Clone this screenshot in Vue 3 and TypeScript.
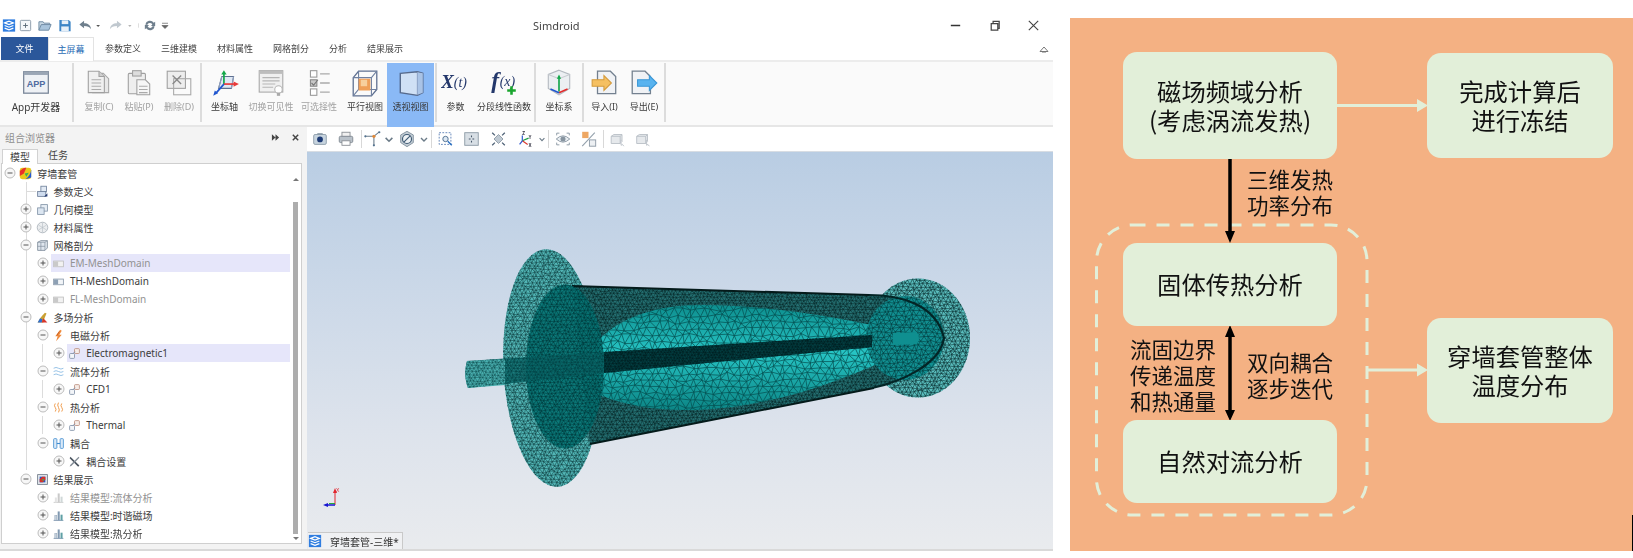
<template>
  <div class="page">
    <div class="window">
      <header class="titlebar">
        <div class="qat">
          <svg v-for="q in qatIcons" :key="q.id" class="qat-icon" :style="{ width: q.w + 'px' }" viewBox="0 0 16 16" v-html="icons[q.id]"></svg>
        </div>
        <span class="app-title">Simdroid</span>
        <div class="win-buttons">
          <svg viewBox="0 0 16 16"><path d="M3 8h10" stroke="#333" stroke-width="1.6" /></svg>
          <svg viewBox="0 0 16 16"><path d="M4.500 6h7v7h-7zM6.500 6V3.500h6.500V11h-1.500" fill="none" stroke="#444" stroke-width="1.300" /></svg>
          <svg viewBox="0 0 16 16"><path d="M3 3l10 10M13 3L3 13" stroke="#444" stroke-width="1.200" /></svg>
        </div>
      </header>

      <nav class="tabs">
        <span class="tab-file">文件</span>
        <span class="tab-home">主屏幕</span>
        <div class="tab-rest">
          <span v-for="t in tabs" :key="t">{{ t }}</span>
        </div>
        <svg class="collapse" viewBox="0 0 10 8"><path d="M1 6.500L5 2l4 4.500zM3 7h4" fill="none" stroke="#777" stroke-width="1" /></svg>
      </nav>

      <section class="ribbon">
        <div v-for="(group, i) in ribbon" :key="i" class="group" :class="'group-' + i">
          <div
            v-for="item in group"
            :key="item.label"
            class="rb-item"
            :class="{ off: item.off, on: item.on }"
            :style="{ width: item.w + 'px' }"
          >
            <svg class="rb-icon" viewBox="0 0 28 28" v-html="icons[item.icon]"></svg>
            <span class="rb-label" :class="{ big: item.icon === 'app' }">{{ item.label }}</span>
          </div>
        </div>
      </section>

      <main class="workspace">
        <aside class="browser">
          <div class="browser-head">
            <span>组合浏览器</span>
            <div class="head-btns">
              <svg viewBox="0 0 10 10"><path d="M1 1.500l4 3.500-4 3.500zM5 1.500l4 3.500-4 3.500z" fill="#444" /></svg>
              <svg viewBox="0 0 10 10"><path d="M2 2l6 6M8 2L2 8" stroke="#444" stroke-width="1.600" /></svg>
            </div>
          </div>
          <div class="browser-tabs">
            <span class="active">模型</span>
            <span>任务</span>
          </div>
          <div class="tree-box">
            <ul class="tree">
              <li v-for="row in rows" :key="row.label" class="tree-row">
                <span
                  v-for="c in row.level + 1"
                  :key="c"
                  class="col"
                  :class="{ guide: row.guides.includes(c - 1), stub: !row.exp && c === row.level + 1 }"
                >
                  <svg v-if="c === row.level + 1 && row.exp" class="expander" viewBox="0 0 12 12">
                    <circle cx="6" cy="6" r="5" fill="#f7f7f7" stroke="#bcbcbc" />
                    <path :d="row.exp === '+' ? 'M3.500 6h5M6 3.500v5' : 'M3.500 6h5'" stroke="#555" stroke-width="1" />
                  </svg>
                </span>
                <div class="node" :class="{ selected: row.selected, dim: row.dim }">
                  <svg class="node-icon" viewBox="0 0 16 16" v-html="icons[row.icon]"></svg>
                  <span class="node-text">{{ row.label }}</span>
                </div>
              </li>
            </ul>
            <div class="scrollbar">
              <i class="arrow-up"></i>
              <b class="thumb"></b>
              <i class="arrow-down"></i>
            </div>
          </div>
        </aside>

        <section class="view">
          <div class="toolbar">
            <template v-for="(t, i) in tools" :key="i">
              <span v-if="t.id === 'sep'" class="tool-sep"></span>
              <svg v-else-if="t.id === 'chev'" class="tool" :style="{ width: t.w + 'px' }" viewBox="0 0 10 16" preserveAspectRatio="xMidYMid meet"><path d="M2 7l3 3 3-3" fill="none" stroke="#6b7b88" stroke-width="1.400" /></svg>
              <svg v-else class="tool" :style="{ width: t.w + 'px' }" viewBox="0 0 20 20" v-html="icons[t.id]"></svg>
            </template>
          </div>
          <div class="canvas">
            <svg class="scene" viewBox="307 152 746 397" preserveAspectRatio="none">
              <defs>
                <linearGradient id="sky" x1="0" y1="0" x2="0" y2="1">
                  <stop offset="0" stop-color="#b9cde3" />
                  <stop offset="0.35" stop-color="#cbd8e8" />
                  <stop offset="0.7" stop-color="#dde3ec" />
                  <stop offset="1" stop-color="#e9ebee" />
                </linearGradient>
                <linearGradient id="core" x1="0" y1="0" x2="0" y2="1">
                  <stop offset="0" stop-color="#0d8e8e" />
                  <stop offset="0.45" stop-color="#27c4c4" />
                  <stop offset="1" stop-color="#0c8686" />
                </linearGradient>
                <clipPath id="clip-fl"><ellipse cx="551.500" cy="368" rx="48" ry="119" transform="rotate(-3 551.500 368)" /></clipPath>
                <clipPath id="clip-fr"><ellipse cx="918" cy="338" rx="52" ry="59.500" /></clipPath>
                <clipPath id="clip-cone"><path :d="conePath" /></clipPath>
                <clipPath id="clip-core"><path :d="corePath" /></clipPath>
                <clipPath id="clip-dl"><ellipse cx="565" cy="366.500" rx="39" ry="82" /></clipPath>
                <clipPath id="clip-dr"><ellipse cx="905" cy="338" rx="39" ry="42" /></clipPath>
                <clipPath id="clip-band"><path :d="bandPath" /></clipPath>
                <clipPath id="clip-rod"><path :d="rodPath" /></clipPath>
              </defs>
              <rect x="307" y="152" width="746" height="397" fill="url(#sky)" />

              <ellipse cx="551.500" cy="368" rx="48" ry="119" transform="rotate(-3 551.500 368)" fill="#52b6b6" />
              <path :d="meshFlangeL" clip-path="url(#clip-fl)" fill="none" stroke="#0a3335" stroke-width=".6" stroke-opacity=".85" />
              <ellipse cx="918" cy="338" rx="52" ry="59.500" fill="#5abdbd" />
              <path :d="meshFlangeR" clip-path="url(#clip-fr)" fill="none" stroke="#082b2d" stroke-width=".65" stroke-opacity=".9" />

              <path :d="conePath" fill="#246f71" />
              <path :d="meshCone" clip-path="url(#clip-cone)" fill="none" stroke="#041d1e" stroke-width=".6" stroke-opacity=".8" />
              <path d="M572 286L869 295M590 444L874 388" stroke="#041a1a" stroke-width="2" fill="none" />

              <path :d="corePath" fill="url(#core)" />
              <path :d="meshCore" clip-path="url(#clip-core)" fill="none" stroke="#064f51" stroke-width=".8" stroke-opacity=".9" />

              <ellipse cx="565" cy="366.500" rx="39" ry="82" fill="#057474" fill-opacity=".9" />
              <path :d="meshDiscL" clip-path="url(#clip-dl)" fill="none" stroke="#032f31" stroke-width=".55" stroke-opacity=".85" />
              <ellipse cx="905" cy="338" rx="39" ry="42" fill="#118f91" />
              <path :d="meshDiscR" clip-path="url(#clip-dr)" fill="none" stroke="#033537" stroke-width=".65" stroke-opacity=".85" />
              <path d="M869 295C900 295 936 304 944 338C940 365 900 382 872 388" fill="none" stroke="#032526" stroke-width="2.200" />

              <path :d="rodPath" fill="#0a6a6b" fill-opacity=".75" />
              <path d="M467 361L505 359L505 385L468 388Q463 375 467 361Z" fill="#4ab0b0" />
              <path :d="meshRod" clip-path="url(#clip-rod)" fill="none" stroke="#06393b" stroke-width=".5" stroke-opacity=".8" />
              <path :d="bandPath" fill="#033f42" />
              <path :d="meshBand" clip-path="url(#clip-band)" fill="none" stroke="#011d1e" stroke-width=".5" />
              <path d="M893 333L917 332Q921 338 917 344L893 345Z" fill="#0f8f90" />

              <!-- axis triad -->
              <path d="M335 505V492" stroke="#e2262e" stroke-width="1" />
              <path d="M333 493l2-5 2 5z" fill="#e2262e" />
              <path d="M335 505H327" stroke="#1717d0" stroke-width="1.500" />
              <path d="M328 503l-5 2 5 2z" fill="#1717d0" />
              <path d="M335 505h-6" stroke="#27a83a" stroke-width="1" transform="translate(0 -1.500)" />
              <text x="336" y="492" class="triad" fill="#e2262e">X</text>
            </svg>
            <div class="doc-tab">
              <svg viewBox="0 0 16 16" v-html="icons.logo"></svg>
              <span>穿墙套管-三维*</span>
            </div>
          </div>
        </section>
      </main>
    </div>

    <div class="flow">
      <svg class="links" viewBox="0 0 563 533">
        <rect x="26.500" y="207" width="270.500" height="290" rx="36" fill="none" stroke="#e2efd9" stroke-width="3" stroke-dasharray="13 11" />
        <path d="M267 87.500H348M297 352H348" stroke="#e2efd9" stroke-width="3" fill="none" />
        <path d="M347 81l11 6.500-11 6.500zM347 345.500l11 6.500-11 6.500z" fill="#e2efd9" />
        <path d="M160 140V215M160 316V394" stroke="#000" stroke-width="3.500" />
        <path d="M155 213h10l-5 12zM155 319h10l-5-12zM155 392h10l-5 11z" fill="#000" />
      </svg>
      <div v-for="n in flowNodes" :key="n.lines[0]" class="flow-node" :class="n.cls">
        <div v-for="l in n.lines" :key="l">{{ l }}</div>
      </div>
      <div class="flow-note note-heat"><div>三维发热</div><div>功率分布</div></div>
      <div class="flow-note note-left"><div>流固边界</div><div>传递温度</div><div>和热通量</div></div>
      <div class="flow-note note-right"><div>双向耦合</div><div>逐步迭代</div></div>
      <i class="edge-mark"></i>
    </div>
  </div>
</template>

<script setup lang="ts">
interface RibbonItem {
  label: string;
  icon: string;
  w: number;
  off?: boolean;
  on?: boolean;
}

interface TreeRow {
  label: string;
  level: number;
  icon: string;
  exp?: "+" | "-";
  guides: number[];
  selected?: boolean;
  dim?: boolean;
}

// roughly triangulated patch, jittered so it reads as a solver mesh
function meshLines(x0: number, y0: number, x1: number, y1: number, step: number, seed: number): string {
  let s = seed;
  const rnd = () => {
    s = (s * 16807) % 2147483647;
    return s / 2147483647 - 0.5;
  };
  const cols = Math.ceil((x1 - x0) / step) + 1;
  const lines = Math.ceil((y1 - y0) / (step * 0.86)) + 1;
  const pts: [number, number][][] = [];
  for (let j = 0; j < lines; j++) {
    const row: [number, number][] = [];
    for (let i = 0; i < cols; i++) {
      row.push([
        x0 + i * step + (j % 2 ? step / 2 : 0) + rnd() * step * 0.55,
        y0 + j * step * 0.86 + rnd() * step * 0.55,
      ]);
    }
    pts.push(row);
  }
  const f = (p: [number, number]) => p[0].toFixed(1) + " " + p[1].toFixed(1);
  let d = "";
  for (let j = 0; j < lines; j++) {
    for (let i = 0; i < cols; i++) {
      const p = pts[j][i];
      if (i + 1 < cols) d += "M" + f(p) + "L" + f(pts[j][i + 1]);
      if (j + 1 < lines) {
        d += "M" + f(p) + "L" + f(pts[j + 1][i]);
        const k = j % 2 ? i + 1 : i - 1;
        if (k >= 0 && k < cols) d += "M" + f(p) + "L" + f(pts[j + 1][k]);
      }
    }
  }
  return d;
}

const conePath = "M572 286L869 295C900 295 936 304 944 338C940 365 900 382 872 388L590 444Z";
const corePath =
  "M597 342C620 316 660 305 700 305C770 305 840 318 886 328L880 363C840 380 800 395 760 402C700 415 640 412 600 395Z";
const rodPath = "M467 361L604 352L604 373L468 388Q463 375 467 361Z";
const bandPath = "M604 352L872 335L872 347L604 373Z";

const meshFlangeL = meshLines(498, 245, 606, 492, 4, 11);
const meshFlangeR = meshLines(864, 276, 972, 400, 4.2, 23);
const meshCone = meshLines(570, 284, 946, 446, 3.8, 37);
const meshCore = meshLines(595, 303, 888, 414, 7.5, 51);
const meshDiscL = meshLines(524, 283, 606, 450, 4, 67);
const meshDiscR = meshLines(864, 294, 946, 382, 5, 79);
const meshRod = meshLines(463, 350, 606, 390, 3.6, 97);
const meshBand = meshLines(602, 333, 874, 375, 3.2, 113);

const qatIcons = [
  { id: "logo", w: 14 },
  { id: "qNew", w: 19 },
  { id: "qOpen", w: 20 },
  { id: "qSave", w: 20 },
  { id: "qUndo", w: 20 },
  { id: "qDrop", w: 10 },
  { id: "qRedo", w: 22 },
  { id: "qDropLight", w: 9 },
  { id: "qSep", w: 5 },
  { id: "qSync", w: 18 },
  { id: "qMore", w: 12 },
];

const tabs = ["参数定义", "三维建模", "材料属性", "网格剖分", "分析", "结果展示"];

const ribbon: RibbonItem[][] = [
  [{ label: "App开发器", icon: "app", w: 72 }],
  [
    { label: "复制(C)", icon: "copy", w: 40, off: true },
    { label: "粘贴(P)", icon: "paste", w: 40, off: true },
    { label: "删除(D)", icon: "del", w: 40, off: true },
  ],
  [
    { label: "坐标轴", icon: "axis", w: 45 },
    { label: "切换可见性", icon: "visible", w: 48, off: true },
    { label: "可选择性", icon: "select", w: 48, off: true },
    { label: "平行视图", icon: "parallel", w: 44 },
    { label: "透视视图", icon: "persp", w: 47, on: true },
  ],
  [
    { label: "参数", icon: "xt", w: 37 },
    { label: "分段线性函数", icon: "fx", w: 60 },
  ],
  [{ label: "坐标系", icon: "coord", w: 46 }],
  [
    { label: "导入(I)", icon: "imp", w: 41 },
    { label: "导出(E)", icon: "exp", w: 38 },
  ],
];

const rows: TreeRow[] = [
  { label: "穿墙套管", level: 0, icon: "root", exp: "-", guides: [] },
  { label: "参数定义", level: 1, icon: "param", guides: [1] },
  { label: "几何模型", level: 1, icon: "geo", exp: "+", guides: [1] },
  { label: "材料属性", level: 1, icon: "mat", exp: "+", guides: [1] },
  { label: "网格剖分", level: 1, icon: "mesh", exp: "-", guides: [1] },
  { label: "EM-MeshDomain", level: 2, icon: "domain", exp: "+", guides: [1], selected: true, dim: true },
  { label: "TH-MeshDomain", level: 2, icon: "domainOn", exp: "+", guides: [1] },
  { label: "FL-MeshDomain", level: 2, icon: "domain", exp: "+", guides: [1], dim: true },
  { label: "多场分析", level: 1, icon: "multi", exp: "-", guides: [1] },
  { label: "电磁分析", level: 2, icon: "em", exp: "-", guides: [1] },
  { label: "Electromagnetic1", level: 3, icon: "link", exp: "+", guides: [1, 2], selected: true },
  { label: "流体分析", level: 2, icon: "wave", exp: "-", guides: [1] },
  { label: "CFD1", level: 3, icon: "link", exp: "+", guides: [1, 2] },
  { label: "热分析", level: 2, icon: "heat", exp: "-", guides: [1] },
  { label: "Thermal", level: 3, icon: "link", exp: "+", guides: [1, 2] },
  { label: "耦合", level: 2, icon: "couple", exp: "-", guides: [1] },
  { label: "耦合设置", level: 3, icon: "tools", exp: "+", guides: [1] },
  { label: "结果展示", level: 1, icon: "result", exp: "-", guides: [] },
  { label: "结果模型:流体分析", level: 2, icon: "barsDim", exp: "+", guides: [], dim: true },
  { label: "结果模型:时谐磁场", level: 2, icon: "bars", exp: "+", guides: [] },
  { label: "结果模型:热分析", level: 2, icon: "bars", exp: "+", guides: [] },
];

const tools = [
  { id: "tCamera", w: 26 },
  { id: "tPrint", w: 26 },
  { id: "sep", w: 4 },
  { id: "tAxis", w: 20 },
  { id: "chev", w: 12 },
  { id: "tHex", w: 24 },
  { id: "chev", w: 10 },
  { id: "sep", w: 4 },
  { id: "tZoom", w: 25 },
  { id: "tFit", w: 27 },
  { id: "tDiamond", w: 27 },
  { id: "tXyz", w: 26 },
  { id: "chev", w: 8 },
  { id: "sep", w: 4 },
  { id: "tEye", w: 26 },
  { id: "tPct", w: 25 },
  { id: "sep", w: 4 },
  { id: "tBox", w: 25 },
  { id: "tBox", w: 26 },
];

const flowNodes = [
  { cls: "n-mag", lines: ["磁场频域分析", "(考虑涡流发热)"] },
  { cls: "n-freeze", lines: ["完成计算后", "进行冻结"] },
  { cls: "n-solid", lines: ["固体传热分析"] },
  { cls: "n-conv", lines: ["自然对流分析"] },
  { cls: "n-whole", lines: ["穿墙套管整体", "温度分布"] },
];

const icons: Record<string, string> = {
  logo: '<rect x="1" y="1" width="14" height="14" fill="#2f7de0"/><path d="M3 5l5-2 5 2-5 2zM3 8l5 2 5-2M3 11l5 2 5-2" fill="none" stroke="#fff" stroke-width="1.300"/>',
  qNew: '<rect x="2.500" y="2.500" width="11" height="11" rx="1" fill="#f5f7fa" stroke="#8b9aa8"/><path d="M8 5.500v5M5.500 8h5" stroke="#5c6b78"/>',
  qOpen: '<path d="M1.500 13V4h4.500l1 1.500h6V7" fill="#c9d8e4" stroke="#6f8ba3"/><path d="M1.500 13l2.500-6h10.500l-2.500 6z" fill="#a9c4dc" stroke="#6f8ba3"/>',
  qSave: '<path d="M2 2h10l2 2v10H2z" fill="#3d85c6"/><rect x="4.500" y="2.500" width="7" height="4" fill="#e7f0f8"/><rect x="4" y="9" width="8" height="5" fill="#e7f0f8"/>',
  qUndo: '<path d="M2 7l5-4v2.500c4 0 7 2 7.500 6.500-1.500-2.500-4-3.500-7.500-3.500V11z" fill="#6f7f8d"/>',
  qDrop: '<path d="M2 7h6l-3 3.500z" fill="#555"/>',
  qRedo: '<path d="M14 7L9 3v2.500C5 5.500 2 7.500 1.500 12 3 9.500 5.500 8.500 9 8.500V11z" fill="#c0c8cf"/>',
  qDropLight: '<path d="M2 7h6l-3 3.500z" fill="#b5b5b5"/>',
  qSep: '<path d="M8 1v14" stroke="#ccc" stroke-width="2"/>',
  qSync: '<path d="M3 7a5 5 0 0 1 9-2l1.500-1v4.500H9l1.500-1.500A3 3 0 0 0 5 7.500zM13 9a5 5 0 0 1-9 2l-1.500 1V7.500H7L5.500 9A3 3 0 0 0 11 8.500z" fill="#6f7f8d"/>',
  qMore: '<path d="M4 5h8M4 8h8l-4 4z" fill="#666" stroke="#666"/>',

  app: '<rect x="2.500" y="3.500" width="23" height="20" fill="#eef1f5" stroke="#7a8799" stroke-width="1.200"/><rect x="2.500" y="3.500" width="23" height="3" fill="#9aa6b5"/><text x="14" y="18" text-anchor="middle" font-family="Liberation Sans" font-weight="700" font-size="8.500" fill="#4f6ba0">APP</text>',
  copy: '<path d="M8 5h10l5 5v13H8z" fill="#e8e8e8" stroke="#a9a9a9"/><path d="M4 3h10l5 5v15H4z" fill="#f0f0f0" stroke="#a0a0a0"/><path d="M14 3v5h5" fill="#cfcfcf" stroke="#a0a0a0"/><path d="M7 11h9M7 14h9M7 17h9M7 20h9" stroke="#aaa"/>',
  paste: '<rect x="4" y="5" width="16" height="19" rx="1" fill="#eee" stroke="#a0a0a0"/><rect x="8" y="2.500" width="8" height="5" fill="#ddd" stroke="#a0a0a0"/><path d="M12 11h8l4 4v10H12z" fill="#f6f6f6" stroke="#a0a0a0"/><path d="M14 17h8M14 20h8M14 23h8" stroke="#aaa"/>',
  del: '<rect x="3" y="3" width="17" height="16" fill="#ededed" stroke="#a0a0a0"/><rect x="9" y="10" width="16" height="15" fill="none" stroke="#a9a9a9"/><path d="M8 7l8 8M16 7l-8 8" stroke="#888" stroke-width="1.200"/>',
  axis: '<path d="M11 8h11l-2 11H8z" fill="#dfe8f4" stroke="#5e6f90"/><path d="M8 19l3-11M20 19l2-11" stroke="#8fa0bc" fill="none"/><path d="M13 15V5" stroke="#12a84a" stroke-width="1.600"/><path d="M10.500 6l2.500-4 2.500 4z" fill="#12a84a"/><path d="M13 15h10" stroke="#e83b3b" stroke-width="1.600"/><path d="M22 12.500l5 2.500-5 2.500z" fill="#e83b3b"/><path d="M13 15L6 23" stroke="#1f55cf" stroke-width="1.600"/><path d="M3 26l1.500-5 3 2.500z" fill="#1f55cf"/>',
  visible: '<rect x="3" y="2.500" width="22" height="20" fill="#f0f0f0" stroke="#a8a8a8"/><rect x="3" y="2.500" width="22" height="3" fill="#bdbdbd"/><path d="M6 9h16M6 12h16M6 15h12M6 18h10" stroke="#b5b5b5"/><circle cx="21" cy="20" r="3.500" fill="#fff" stroke="#b5b5b5"/><rect x="19.500" y="23" width="3" height="3" fill="#aaa"/>',
  select: '<rect x="6" y="2.500" width="6" height="6" fill="#fff" stroke="#999"/><rect x="6" y="11" width="6" height="6" fill="#c9c9c9" stroke="#888"/><path d="M7 14l2 2 4-5" stroke="#777" fill="none"/><rect x="6" y="19.500" width="6" height="6" fill="#fff" stroke="#999"/><path d="M15 5.500h9M15 14h9M15 22.500h9" stroke="#aaa" stroke-width="1.200"/>',
  parallel: '<path d="M8 3h17v17l-5 6H3V9z" fill="none" stroke="#5e6f90" stroke-width="1.200"/><path d="M3 9h17v17M20 9l5-6M8 3v17h17M3 26l5-6" fill="none" stroke="#6f80a0" stroke-width="1"/><rect x="8" y="10" width="11" height="11" fill="#ef9f58"/><rect x="10" y="11" width="6" height="6" fill="#f7cf9d"/>',
  persp: '<path d="M4 5L20 3.500 25 5V23L20 25.500 4 23Z" fill="#cfe0f5" stroke="#55698c" stroke-width="1.300"/><path d="M20 3.500V25.500" stroke="#6f83a5"/><path d="M20 4L25 5V23L20 25z" fill="#a9c3e6"/>',
  xt: '<text x="0" y="19" font-family="Liberation Serif" font-style="italic" font-weight="700" font-size="18" fill="#24386b">X</text><text x="12" y="18" font-family="Liberation Serif" font-style="italic" font-size="13" fill="#24386b">(t)</text>',
  fx: '<text x="2" y="19" font-family="Liberation Serif" font-style="italic" font-weight="700" font-size="22" fill="#24386b">f</text><text x="10" y="17" font-family="Liberation Serif" font-style="italic" font-size="13" fill="#24386b">(x)</text><path d="M21 17v8M17 21h8" stroke="#1aa52e" stroke-width="2.400"/>',
  coord: '<path d="M14 2l10 4v13l-10 6-10-6V6z" fill="#eceff2" stroke="#b2b8bf"/><path d="M4 6l10 4 10-4M14 10v15" fill="none" stroke="#c8ccd1"/><path d="M14 22V9" stroke="#12a84a" stroke-width="1.500"/><path d="M12 10l2-4 2 4z" fill="#12a84a"/><path d="M14 23l8-3.500" stroke="#e32b2b" stroke-width="1.500"/><path d="M14 23l-8-3.500" stroke="#1f55cf" stroke-width="1.500"/>',
  imp: '<path d="M7 3h12l5 5v16H7z" fill="#f0f2f5" stroke="#73808f" stroke-width="1.200"/><path d="M2 11h11V7l7 7-7 7v-4H2z" fill="#f5c062" stroke="#d49b3d"/>',
  exp: '<path d="M3 3h12l5 5v16H3z" fill="#f0f2f5" stroke="#73808f" stroke-width="1.200"/><path d="M8 11h11V7l7 7-7 7v-4H8z" fill="#58b3ef" stroke="#3b97d6"/>',

  root: '<rect x="1" y="1" width="14" height="14" rx="3" fill="#e8c81a"/><path d="M1 5Q6 0 9 1L6 8 1 11z" fill="#e9302a"/><path d="M15 3v10l-7 2q6-4 7-12z" fill="#2257d9"/><path d="M7 8l5-1-3 5z" fill="#35b25a"/>',
  param: '<rect x="6" y="1.500" width="7" height="7" fill="#e2eaf4" stroke="#6c7e98"/><rect x="2" y="8" width="10" height="6" fill="#cfdcee" stroke="#6c7e98"/><path d="M10 14l4-4v4z" fill="#253a70"/>',
  geo: '<rect x="6" y="2" width="8" height="8" fill="#e8eef5" stroke="#7f90a5"/><rect x="2" y="6" width="8" height="8" fill="#dce6f1" stroke="#7f90a5"/>',
  mat: '<circle cx="8" cy="8" r="6.500" fill="#eceef0" stroke="#a8b0b8"/><path d="M3 5l10 6M3 11l10-6M8 2v12" stroke="#b8bfc6" stroke-width=".8"/>',
  mesh: '<path d="M2 4l4-2h8v9l-3 3H2z" fill="#dfe6ee" stroke="#7c8a99"/><path d="M2 4h9v10M11 4l3-2M2 9h9M6 4v10" fill="none" stroke="#7c8a99" stroke-width=".8"/>',
  domain: '<rect x="2" y="5" width="12" height="7" fill="#f2f2f2" stroke="#bdbdbd"/><rect x="2.500" y="5.500" width="5" height="6" fill="#c9c9c9"/>',
  domainOn: '<rect x="2" y="5" width="12" height="7" fill="#f2f5f8" stroke="#8797a8"/><rect x="2.500" y="5.500" width="5" height="6" fill="#8da0b4"/>',
  multi: '<path d="M2 14Q5 8 11 2l2 1Q10 9 9 14z" fill="#c9a033"/><path d="M2 14l3-5 3 1-1 4z" fill="#2f6fd0"/><path d="M7 14l2-5 5 5z" fill="#d8352c"/>',
  em: '<path d="M10 1L4 9h3l-2 6 7-8H9l3-5z" fill="#ef8a3c"/><path d="M9 3L6 8" stroke="#b34e1a" stroke-width=".8"/>',
  link: '<rect x="2" y="8" width="6" height="6" rx="1" fill="#f4f6f9" stroke="#7d8da4"/><rect x="8" y="2" width="6" height="6" rx="1" fill="#f7ede8" stroke="#b98a7a"/><path d="M6 8l3-2" stroke="#7d8da4"/>',
  wave: '<path d="M2 4q3-2 6 0t6 0M2 8q3-2 6 0t6 0M2 12q3-2 6 0t6 0" fill="none" stroke="#7fb4e0" stroke-width="1"/>',
  heat: '<path d="M4 3q-2 3 0 5t0 5M8 2q-2 3 0 6t0 6M12 3q-2 3 0 5t0 5" fill="none" stroke="#ef9a4a" stroke-width="1.200"/>',
  couple: '<rect x="2" y="2" width="4" height="12" rx="1" fill="#dbe9f7" stroke="#3f8cd0"/><rect x="10" y="2" width="4" height="12" rx="1" fill="#dbe9f7" stroke="#3f8cd0"/><path d="M6 8h4" stroke="#3f8cd0" stroke-width="1.400"/>',
  tools: '<path d="M3 2l11 11-1.500 1.500L2 4z" fill="#4b5560"/><path d="M13 2l1 1.500-10 10L2 14l1-2z" fill="#808a94"/>',
  result: '<rect x="2" y="2" width="12" height="12" fill="#e4e8ec" stroke="#6c7785"/><rect x="4.500" y="4.500" width="7" height="7" fill="#2357c6"/><path d="M4.500 8l3-3.500h4V8l-3 3.500h-4z" fill="#d8332a"/><path d="M7 8l3-1-1 3z" fill="#33b35a"/>',
  bars: '<path d="M2 14h12" stroke="#6e8aa8"/><rect x="3.500" y="8" width="2.500" height="6" fill="#c7d3df" stroke="#7d92a8" stroke-width=".5"/><rect x="7" y="3" width="2.500" height="11" fill="#8098b0"/><rect x="10.500" y="7" width="2.500" height="7" fill="#5fa0a5"/>',
  barsDim: '<path d="M2 14h12" stroke="#c4c4c4"/><rect x="3.500" y="8" width="2.500" height="6" fill="#e3e3e3"/><rect x="7" y="3" width="2.500" height="11" fill="#c9c9c9"/><rect x="10.500" y="7" width="2.500" height="7" fill="#d0d8d8"/>',

  tCamera: '<rect x="3" y="5" width="14" height="11" rx="1.500" fill="#c7d4df" stroke="#8c9ca9"/><circle cx="10" cy="10.500" r="3.200" fill="#1d3a74"/><rect x="7" y="3.500" width="6" height="2" fill="#8c9ca9"/>',
  tPrint: '<rect x="5.500" y="2.500" width="9" height="5" fill="#f0f0f0" stroke="#8a8f95"/><rect x="2.500" y="7" width="15" height="7" rx="1.500" fill="#b9c1c9" stroke="#7f8790"/><rect x="5.500" y="12" width="9" height="5" fill="#fff" stroke="#8a8f95"/>',
  tAxis: '<path d="M1 7h10l6-5M11 7v10" fill="none" stroke="#6a7b8b" stroke-width="1.200"/><circle cx="11" cy="7" r="1.800" fill="#e08a3c"/><circle cx="1.500" cy="7" r="1.200" fill="#54738f"/><circle cx="17" cy="2.500" r="1.200" fill="#54738f"/><circle cx="11" cy="17" r="1.200" fill="#54738f"/>',
  tHex: '<path d="M10 1.500l7 4v8.500l-7 4.500-7-4.500V5.500z" fill="#c3cdd5" stroke="#7f8f9c"/><circle cx="10" cy="10" r="5" fill="#eef2f5" stroke="#3f5a74" stroke-width="1.300"/><path d="M6.500 13.500l7-7" stroke="#3f5a74" stroke-width="1.300"/>',
  tZoom: '<rect x="3" y="3" width="13" height="13" fill="none" stroke="#5a7fb5" stroke-dasharray="2 1.500"/><circle cx="10" cy="10" r="3" fill="#dde8f3" stroke="#4a6a8c"/><path d="M12.500 12.500l4.500 4.500" stroke="#2a6fc0" stroke-width="1.600"/>',
  tFit: '<rect x="2.500" y="3" width="15" height="14" fill="#d8dfe5" stroke="#8c99a5"/><path d="M10 6v2M7 10h2M11 10h2M10 12v2" stroke="#46576a" stroke-width="1.200"/>',
  tDiamond: '<path d="M10 5l5 5-5 5-5-5z" fill="#bfc9d2" stroke="#8c99a5"/><path d="M3 3l3 3M17 3l-3 3M3 17l3-3M17 17l-3-3" stroke="#4d6075" stroke-width="1.400"/>',
  tXyz: '<path d="M7 12l7-3" stroke="#1b9e45" stroke-width="1.300"/><path d="M7 12l6 4" stroke="#d8352c" stroke-width="1.300"/><path d="M7 12l-3 4" stroke="#2a55cf" stroke-width="1.300"/><path d="M7 12V6" stroke="#2a55cf" stroke-width="1.300"/><text x="7" y="5" font-family="Liberation Sans" font-weight="700" font-size="5" fill="#223">Z</text><text x="14" y="10" font-family="Liberation Sans" font-weight="700" font-size="5" fill="#223">Y</text><text x="14" y="19" font-family="Liberation Sans" font-weight="700" font-size="5" fill="#223">X</text>',
  tEye: '<path d="M3 6V3.500h3M14 3.500h3V6M3 14v2.500h3M14 16.500h3V14" fill="none" stroke="#8794a0"/><path d="M2.500 10Q10 3 17.500 10 10 17 2.500 10z" fill="#e8edf1" stroke="#8794a0"/><circle cx="10" cy="10" r="2.800" fill="#8794a0"/>',
  tPct: '<rect x="3" y="2" width="7" height="7" fill="#eea763"/><rect x="11" y="11" width="7" height="7" fill="#edf0f3" stroke="#8c99a5"/><path d="M3 18L17 3" stroke="#93a0ab" stroke-width="1.200"/>',
  tBox: '<path d="M3 7l3-2h9v8l-2 2H3z" fill="#e6e9ec" stroke="#b9c0c6"/><path d="M3 7h10v8M13 7l2-2" fill="none" stroke="#b9c0c6"/><path d="M14 11v6l1.500-1 1.500 2" fill="#fff" stroke="#b9c0c6"/>',
};
</script>

<style>
html,
body {
  background: #fff;
}
</style>

<style scoped>
.page {
  display: flex;
  align-items: flex-start;
  width: 1633px;
  height: 558px;
  overflow: hidden;
  font-family: "Noto Sans", "Noto Sans CJK SC", sans-serif;
  background: #fff;
}

.window {
  display: flex;
  flex-direction: column;
  flex: none;
  width: 1053px;
  height: 551px;
  margin-right: 17px;
  filter: blur(0.5px);
  color: #333;
}

.titlebar {
  display: flex;
  align-items: center;
  height: 37px;
  padding: 14px 0 0 2px;
  box-sizing: border-box;
}

.qat {
  display: flex;
  width: 169px;
  flex: none;
}

.qat-icon {
  height: 15px;
  flex: none;
}

.app-title {
  margin-left: 362px;
  font-size: 11px;
  color: #444;
}

.win-buttons {
  display: flex;
  margin-left: auto;
}

.win-buttons svg {
  width: 39px;
  height: 15px;
}

.tabs {
  display: flex;
  align-items: stretch;
  height: 23px;
  padding-left: 1px;
  font-size: 9px;
  position: relative;
}

.tab-file {
  width: 47px;
  background: #2b579a;
  color: #fff;
  line-height: 23px;
  text-align: center;
}

.tab-home {
  width: 46px;
  line-height: 23px;
  text-align: center;
  color: #2b6cb5;
  border: 1px solid #e3e3e3;
  border-width: 1px 1px 0;
  box-sizing: border-box;
  background: #fff;
  margin-bottom: -1px;
  z-index: 1;
}

.tab-rest {
  display: flex;
  gap: 20px;
  margin-left: 11px;
  line-height: 23px;
  color: #444;
}

.collapse {
  position: absolute;
  right: 4px;
  top: 8px;
  width: 10px;
  height: 8px;
}

.ribbon {
  display: flex;
  height: 67px;
  box-sizing: border-box;
  background: #fafafa;
  border-top: 2px solid #ececec;
  border-bottom: 2px solid #e6e6e6;
}

.group {
  display: flex;
  height: 59px;
  margin-top: 1px;
  border-right: 2px solid #dcdcdc;
  padding-right: 1px;
}

.group-1 {
  padding-left: 5px;
}

.group-3,
.group-4,
.group-0 {
  padding-right: 0;
}

.rb-item {
  display: flex;
  flex-direction: column;
  align-items: center;
  flex: none;
  height: 64px;
  padding-top: 5px;
  box-sizing: border-box;
  position: relative;
  z-index: 1;
}

.rb-item.on {
  background: #8ab9f6;
}

.rb-icon {
  width: 30px;
  height: 30px;
}

.rb-label {
  margin-top: 3px;
  font-size: 9px;
  line-height: 12px;
  white-space: nowrap;
  color: #3a3a3a;
}

.rb-label.big {
  font-size: 10px;
}

.off .rb-label {
  color: #a2a2a2;
}

.workspace {
  display: flex;
  flex: 1;
  min-height: 0;
  border-bottom: 2px solid #d9d9d9;
}

.browser {
  display: flex;
  flex-direction: column;
  flex: none;
  width: 307px;
  background: #f3f3f3;
  padding-bottom: 5px;
  box-sizing: border-box;
}

.browser-head {
  display: flex;
  align-items: center;
  justify-content: space-between;
  height: 21px;
  padding: 0 5px;
  font-size: 10px;
  color: #8f8f8f;
}

.head-btns {
  display: flex;
  gap: 11px;
  padding-right: 2px;
}

.head-btns svg {
  width: 9px;
  height: 9px;
}

.browser-tabs {
  display: flex;
  height: 15px;
  padding-left: 2px;
  font-size: 10px;
  line-height: 15px;
  color: #444;
}

.browser-tabs span {
  width: 36px;
  text-align: center;
  margin-right: 4px;
}

.browser-tabs .active {
  background: #fff;
  border: 1px solid #d2d2d2;
  border-bottom: none;
  box-sizing: border-box;
  margin-right: 2px;
  position: relative;
  top: 1px;
}

.tree-box {
  display: flex;
  flex: 1;
  width: 301px;
  margin-left: 1px;
  background: #fff;
  border: 1px solid #cfcfcf;
  box-sizing: border-box;
}

.tree {
  width: 288px;
  flex: none;
  margin: 0;
  padding: 0;
  list-style: none;
}

.tree-row {
  display: flex;
  align-items: center;
  height: 18px;
}

.col {
  display: flex;
  align-items: center;
  justify-content: center;
  width: 16.3px;
  height: 18px;
  flex: none;
  position: relative;
}

.col.guide::before {
  content: "";
  position: absolute;
  left: 7.5px;
  top: 0;
  bottom: 0;
  width: 1px;
  background: #dcdcdc;
}

.col.stub::after {
  content: "";
  position: absolute;
  left: 8px;
  top: 9px;
  width: 10px;
  height: 1px;
  background: #dcdcdc;
}

.expander {
  width: 12px;
  height: 12px;
  position: relative;
}

.node {
  display: flex;
  align-items: center;
  flex: 1;
  height: 18px;
  font-size: 10px;
  color: #3c3c3c;
  white-space: nowrap;
}

.node.selected {
  background: #e6e6fa;
}

.node.dim {
  color: #929292;
}

.node-icon {
  width: 13px;
  height: 13px;
  margin: 0 5px 0 1px;
  flex: none;
}

.scrollbar {
  display: flex;
  flex-direction: column;
  align-items: center;
  flex: 1;
  padding-top: 14px;
  padding-bottom: 1px;
  box-sizing: border-box;
}

.scrollbar .thumb {
  display: block;
  width: 5px;
  height: 332px;
  margin-top: 21px;
  background: #adadad;
}

.arrow-up,
.arrow-down {
  width: 0;
  height: 0;
  border-left: 3px solid transparent;
  border-right: 3px solid transparent;
}

.arrow-up {
  border-bottom: 3px solid #777;
}

.arrow-down {
  margin-top: 3px;
  border-top: 3px solid #777;
}

.view {
  display: flex;
  flex-direction: column;
  flex: 1;
  min-width: 0;
}

.toolbar {
  display: flex;
  align-items: center;
  flex: none;
  height: 25px;
  background: #fff;
  border-bottom: 1px solid #d8dde3;
  box-sizing: border-box;
}

.tool {
  height: 18px;
  flex: none;
}

.tool-sep {
  width: 1px;
  height: 18px;
  margin: 0 1.5px;
  background: #d8d8d8;
  flex: none;
}

.canvas {
  flex: 1;
  min-height: 0;
  position: relative;
}

.scene {
  display: block;
  width: 100%;
  height: 100%;
}

.triad {
  font-size: 5px;
  font-family: "Liberation Sans", sans-serif;
}

.doc-tab {
  position: absolute;
  left: 1px;
  bottom: 0;
  display: flex;
  align-items: center;
  gap: 8px;
  width: 95px;
  height: 17px;
  box-sizing: border-box;
  background: #f0f1f3;
  border: 1px solid #c9c9c9;
  border-width: 1px 1px 0 0;
  font-size: 10px;
  white-space: nowrap;
}

.doc-tab svg {
  width: 14px;
  height: 14px;
  flex: none;
}

.flow {
  position: relative;
  flex: none;
  width: 563px;
  height: 533px;
  margin-top: 18px;
  background: #f4b183;
  font-family: "Noto Sans CJK SC", "Noto Sans", sans-serif;
  color: #111;
  filter: blur(0.3px);
}

.links {
  position: absolute;
  inset: 0;
  width: 100%;
  height: 100%;
}

.flow-node {
  position: absolute;
  display: flex;
  flex-direction: column;
  align-items: center;
  justify-content: center;
  background: #e2efd9;
  border-radius: 14px;
  font-size: 24.300px;
  line-height: 28.500px;
  white-space: nowrap;
}

.n-mag {
  left: 53px;
  top: 34px;
  width: 214px;
  height: 107px;
}

.n-freeze {
  left: 357px;
  top: 35px;
  width: 186px;
  height: 105px;
}

.n-solid {
  left: 53px;
  top: 225px;
  width: 214px;
  height: 83px;
}

.n-conv {
  left: 53px;
  top: 402px;
  width: 214px;
  height: 83px;
}

.n-whole {
  left: 357px;
  top: 300px;
  width: 186px;
  height: 105px;
}

.flow-note {
  position: absolute;
  font-size: 21.500px;
  line-height: 26px;
  white-space: nowrap;
}

.note-heat {
  left: 177px;
  top: 148px;
}

.note-left {
  left: 60px;
  top: 318px;
}

.note-right {
  left: 177px;
  top: 331px;
}

.edge-mark {
  position: absolute;
  right: 0;
  bottom: 0;
  width: 1px;
  height: 36px;
  background: #000;
}
</style>
